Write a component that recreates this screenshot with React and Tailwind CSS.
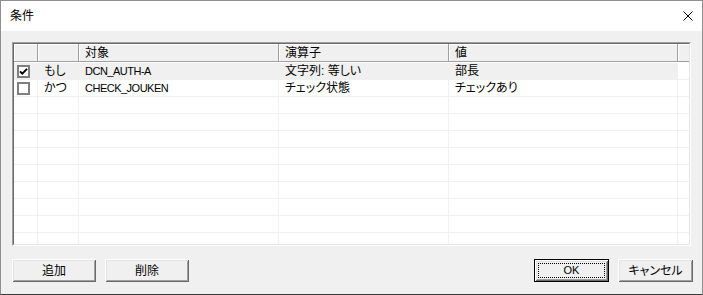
import React from "react";

const W = ["w-[24px]", "w-[41px]", "w-[200px]", "w-[170px]", "w-[229px]"];

const rows = [
  { checked: true, a: "もし", b: "DCN_AUTH-A", c: "文字列: 等しい", d: "部長", sel: true },
  { checked: false, a: "かつ", b: "CHECK_JOUKEN", c: "チェック状態", d: "チェックあり" },
  {}, {}, {}, {}, {}, {}, {}, {},
];

function Check({ checked }) {
  return (
    <div className="ml-[3px] w-[13px] h-[13px] border-2 border-[#7f7f7f] bg-white flex items-center justify-center shrink-0">
      {checked && (
        <svg width="9" height="9" viewBox="0 0 9 9">
          <path d="M1 4.3 L3.3 6.6 L8 1.8" fill="none" stroke="#000" strokeWidth="1.9" />
        </svg>
      )}
    </div>
  );
}

function Row({ r, filler }) {
  const bg = r.sel ? "bg-[#f0f0f0]" : "";
  const base = filler ? "flex flex-1" : "flex h-[17px] shrink-0 border-b border-[#f0f0f0]";
  const cell = "border-r border-[#f0f0f0] flex items-center whitespace-nowrap overflow-hidden";
  return (
    <div className={base}>
      <div className={`${W[0]} ${cell} ${bg}`}>{r.a !== undefined && <Check checked={r.checked} />}</div>
      <div className={`${W[1]} ${cell} ${bg} pl-[6px] leading-none`}>{r.a}</div>
      <div className={`${W[2]} ${cell} ${bg} pl-[6px] leading-none text-[11px] tracking-[-0.5px]`}>{r.b}</div>
      <div className={`${W[3]} ${cell} ${bg} pl-[6px] leading-none`}>{r.c}</div>
      <div className={`${W[4]} ${cell} ${bg} pl-[6px] leading-none`}>{r.d}</div>
      <div className="flex-1" />
    </div>
  );
}

const hcell =
  "h-[18px] border-r border-b border-[#a0a0a0] shadow-[inset_1px_1px_0_#fff] flex items-center pl-[6px] leading-none whitespace-nowrap";

function Btn({ children, className = "", def }) {
  const face =
    "flex items-center justify-center bg-[#f0f0f0] shadow-[inset_1px_1px_0_#fff,inset_-1px_-1px_0_#696969,inset_2px_2px_0_#e3e3e3,inset_-2px_-2px_0_#a0a0a0]";
  if (def) {
    return (
      <div className={`h-[23px] border border-black flex ${className}`}>
        <div className={`${face} flex-1 p-[3px]`}>
          <div className="flex-1 h-full border border-dotted border-black flex items-center justify-center leading-none text-[11px]">
            {children}
          </div>
        </div>
      </div>
    );
  }
  return <div className={`h-[23px] leading-none ${face} ${className}`}>{children}</div>;
}

export default function App() {
  return (
    <div className="w-[703px] h-[295px] flex flex-col border border-[#8f8f8f] border-b-[#3a3a3a] text-[12px] text-black font-['Liberation_Sans','Noto_Sans_CJK_JP',sans-serif] [font-feature-settings:'palt'] overflow-hidden">
      <div className="h-[30px] bg-white flex items-center justify-between pl-[9px] pr-[9px] shrink-0">
        <span className="leading-none">条件</span>
        <svg width="10" height="10" viewBox="0 0 10 10">
          <path d="M0.5 0.5 L9.5 9.5 M9.5 0.5 L0.5 9.5" stroke="#000" strokeWidth="1" fill="none" />
        </svg>
      </div>
      <div className="flex-1 bg-[#f0f0f0] px-[11px] pt-[11px] flex flex-col">
        <div className="h-[204px] border border-[#a0a0a0] border-r-white border-b-white">
          <div className="h-full border border-[#696969] border-r-[#e3e3e3] border-b-[#e3e3e3] bg-white flex flex-col">
            <div className="flex h-[19px] shrink-0 bg-[#f0f0f0] border-b border-white">
              <div className={`${W[0]} ${hcell}`} />
              <div className={`${W[1]} ${hcell}`} />
              <div className={`${W[2]} ${hcell}`}>対象</div>
              <div className={`${W[3]} ${hcell}`}>演算子</div>
              <div className={`${W[4]} ${hcell}`}>値</div>
              <div className="flex-1 h-[18px] border-b border-[#a0a0a0] shadow-[inset_1px_1px_0_#fff]" />
            </div>
            {rows.map((r, i) => (
              <Row key={i} r={r} />
            ))}
            <Row r={{}} filler />
          </div>
        </div>
        <div className="mt-[13px] flex items-center -mr-[2px]">
          <Btn className="w-[84px]">追加</Btn>
          <Btn className="w-[84px] ml-[9px]">削除</Btn>
          <div className="flex-1" />
          <Btn className="w-[75px]" def>OK</Btn>
          <Btn className="w-[75px] ml-[9px]">キャンセル</Btn>
        </div>
      </div>
    </div>
  );
}
